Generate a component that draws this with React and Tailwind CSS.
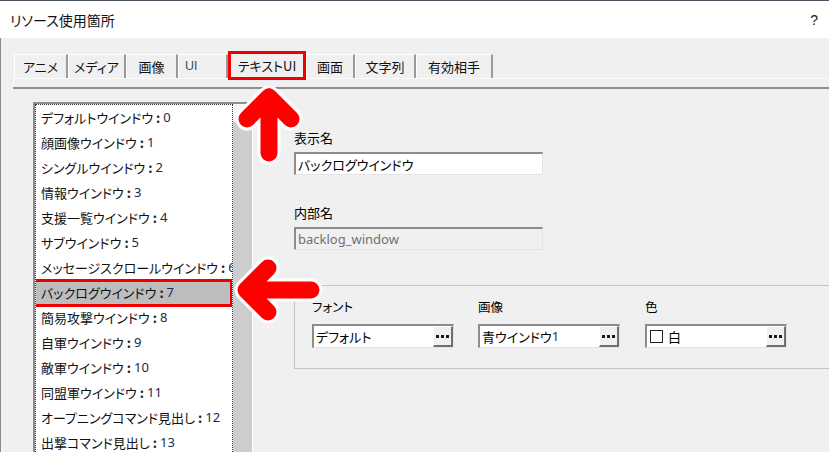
import React from "react";

const items = [
  ["デフォルトウインドウ", "0"],
  ["顔画像ウインドウ", "1"],
  ["シングルウインドウ", "2"],
  ["情報ウインドウ", "3"],
  ["支援一覧ウインドウ", "4"],
  ["サブウインドウ", "5"],
  ["メッセージスクロールウインドウ", "6"],
  ["バックログウインドウ", "7"],
  ["簡易攻撃ウインドウ", "8"],
  ["自軍ウインドウ", "9"],
  ["敵軍ウインドウ", "10"],
  ["同盟軍ウインドウ", "11"],
  ["オープニングコマンド見出し", "12"],
  ["出撃コマンド見出し", "13"],
  ["待機コマンド見出し", "14"],
];

const tabs = [
  ["アニメ", "w-[54px]"],
  ["メディア", "w-[58px]"],
  ["画像", "w-[52px]"],
  ["UI", "w-[50px]"],
  ["テキストUI", "w-[78px]", true],
  ["画面", "w-[49px]"],
  ["文字列", "w-[61px]"],
  ["有効相手", "w-[77px]"],
];

function DotsButton() {
  return (
    <div className="w-[20px] h-full bg-[#f0f0f0] border-t border-l border-t-white border-l-white border-r-2 border-b-2 border-r-[#6f6f6f] border-b-[#6f6f6f] flex items-center justify-center gap-[2px]">
      <span className="w-[3px] h-[3px] bg-[#1a1a1a]" />
      <span className="w-[3px] h-[3px] bg-[#1a1a1a]" />
      <span className="w-[3px] h-[3px] bg-[#1a1a1a]" />
    </div>
  );
}

function PickField({ children }) {
  return (
    <div className="w-[142px] h-[24px] bg-white flex border-t-2 border-l-2 border-t-[#8c8c8c] border-l-[#8c8c8c] border-b border-r border-b-[#e4e4e4] border-r-[#e4e4e4]">
      <div className="flex-1 flex items-center pl-[2px] text-[13px] leading-none">{children}</div>
      <DotsButton />
    </div>
  );
}

export default function App() {
  return (
    <div className="relative w-[829px] h-[452px] overflow-hidden bg-[#f0f0f0] text-black font-['Noto_Sans_CJK_JP','Noto_Sans',sans-serif] [font-feature-settings:'palt']">
      {/* title bar */}
      <div className="h-[38px] bg-white border-t border-t-[#4a5360] flex items-center justify-between pl-[10px] pr-[11px]">
        <span className="text-[14px] leading-none text-[#111]">リソース使用箇所</span>
        <span className="text-[14px] leading-none font-['Liberation_Sans',sans-serif] text-[#222]">?</span>
      </div>

      {/* body */}
      <div className="h-[414px] border-l border-l-[#8a8a8a] flex flex-col overflow-hidden">
        <div className="h-[13px] shrink-0" />
        {/* tabs */}
        <div className="h-[27px] shrink-0 pl-[13px] flex items-end">
          {tabs.map(([label, w, sel]) =>
            sel ? (
              <div
                key={label}
                className={`${w} h-[29px] -mb-[2px] relative z-10 bg-[#f0f0f0] border-[3px] border-[#ee0000] flex items-center justify-center text-[13px] leading-none text-[#111]`}
              >
                {label}
              </div>
            ) : label === "UI" ? (
              <div
                key={label}
                className={`${w} h-[24px] border-t border-l border-t-white border-l-white border-r-2 border-r-[#9a9a9a] flex items-center justify-start pl-[6px] leading-none text-[#3f4a5e] font-['Liberation_Sans',sans-serif] text-[12.5px]`}
              >
                {label}
              </div>
            ) : (
              <div
                key={label}
                className={`${w} h-[24px] border-t border-l border-t-white border-l-white border-r-2 border-r-[#9a9a9a] flex items-center justify-center leading-none text-[#111] text-[13px]`}
              >
                {label}
              </div>
            )
          )}
        </div>
        <div className="ml-[12px] h-[9px] shrink-0 border-t border-t-[#fcfcfc] border-l border-l-[#fcfcfc]" />

        {/* content area */}
        <div className="ml-[12px] flex-1 min-h-0 overflow-hidden border-t-2 border-t-[#8e8e8e] flex items-start">
          {/* list box */}
          <div className="ml-[20px] mt-[13px] w-[220px] h-[360px] shrink-0 bg-white border-t-2 border-l-2 border-t-[#8e8e8e] border-l-[#8e8e8e] flex">
            <div className="w-[198px] h-full border border-dotted border-[#333] overflow-hidden">
              {items.map(([name, n]) => {
                const sel = n === "7";
                return (
                  <div
                    key={n}
                    className={`relative h-[25px] flex items-center pl-[5px] text-[13px] leading-none whitespace-nowrap ${sel ? "bg-[#bdbdbd]" : ""}`}
                  >
                    <span className="text-[#111]">{name}</span>
                    <span className="ml-[3px] font-bold text-[#222]">:</span>
                    <span className="ml-[3px] font-['Noto_Sans',sans-serif] text-[#1d2a44]">{n}</span>
                    {sel && (
                      <span className="absolute -left-[3px] -right-[1px] -top-[1px] -bottom-[2px] border-[3px] border-[#ee0000]" />
                    )}
                  </div>
                );
              })}
            </div>
            <div className="w-[19px] h-full flex flex-col">
              <div className="h-[18px] bg-[#f6f6f6]" />
              <div className="flex-1 bg-[#cdcdcd]" />
            </div>
          </div>

          {/* right side */}
          <div className="ml-[41px] mt-[40px] flex flex-col shrink-0">
            <div className="h-[16px] flex items-center text-[13px] leading-none">表示名</div>
            <div className="mt-[7px] w-[249px] h-[23px] bg-white border-t-2 border-l-2 border-t-[#8c8c8c] border-l-[#8c8c8c] border-b border-r border-b-[#e4e4e4] border-r-[#e4e4e4] flex items-center pl-[2px] text-[13px] leading-none">
              バックログウインドウ
            </div>
            <div className="mt-[29px] h-[16px] flex items-center text-[13px] leading-none">内部名</div>
            <div className="mt-[7px] w-[249px] h-[23px] bg-[#f0f0f0] border-t-2 border-l-2 border-t-[#8c8c8c] border-l-[#8c8c8c] border-b border-r border-b-[#e4e4e4] border-r-[#e4e4e4] flex items-center pl-[2px] text-[13px] leading-none font-['Noto_Sans',sans-serif] text-[#707070]">
              backlog_window
            </div>

            {/* group box */}
            <div className="mt-[35px] w-[600px] h-[84px] border border-[#c4c4c4] pl-[17px] pt-[13px] flex">
              <div className="w-[166px] flex flex-col">
                <div className="h-[16px] flex items-center text-[12.5px] leading-none">フォント</div>
                <div className="mt-[9px]">
                  <PickField>デフォルト</PickField>
                </div>
              </div>
              <div className="w-[167px] flex flex-col">
                <div className="h-[16px] flex items-center text-[12.5px] leading-none">画像</div>
                <div className="mt-[9px]">
                  <PickField>
                    青ウインドウ<span className="font-['Noto_Sans',sans-serif] text-[#1d2a66]">1</span>
                  </PickField>
                </div>
              </div>
              <div className="w-[166px] flex flex-col">
                <div className="h-[16px] flex items-center text-[12.5px] leading-none">色</div>
                <div className="mt-[9px]">
                  <PickField>
                    <span className="ml-[1px] w-[13px] h-[13px] border border-[#222] bg-white" />
                    <span className="ml-[5px]">白</span>
                  </PickField>
                </div>
              </div>
            </div>
          </div>
        </div>
      </div>

      {/* annotation arrows */}
      <svg className="absolute left-0 top-0 pointer-events-none" width="829" height="452" viewBox="0 0 829 452">
        <g fill="none" strokeLinecap="round" strokeLinejoin="round">
          <path d="M247 119 L269 97 L291 119 M269 97 L269 153" stroke="#ffffff" strokeWidth="23" />
          <path d="M247 119 L269 97 L291 119 M269 97 L269 153" stroke="#ff0000" strokeWidth="17" />
          <path d="M268 268 L246 290 L268 312 M246 290 L311 290" stroke="#ffffff" strokeWidth="23" />
          <path d="M268 268 L246 290 L268 312 M246 290 L311 290" stroke="#ff0000" strokeWidth="17" />
        </g>
      </svg>
    </div>
  );
}
